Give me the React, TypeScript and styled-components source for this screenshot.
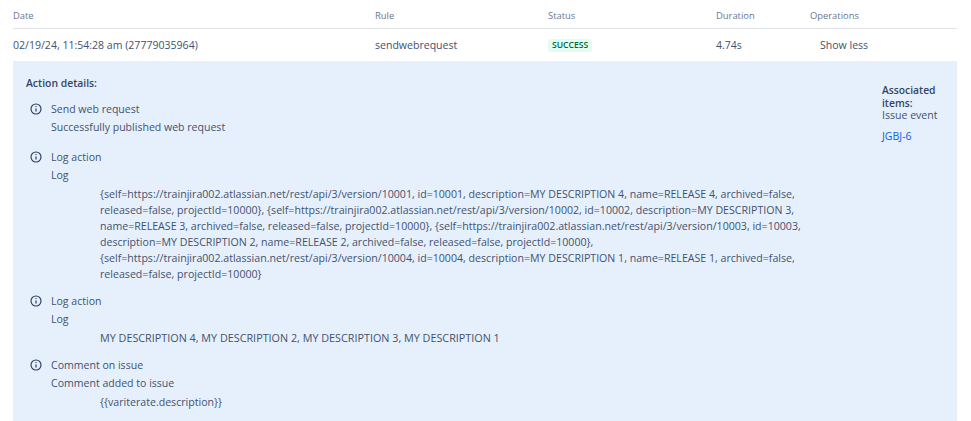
import styled, { createGlobalStyle } from 'styled-components';

const GlobalStyle = createGlobalStyle`
    html, body {
        margin: 0;
        padding: 0;
        background: #fff;
    }
    body {
        font-family: "Open Sans", "Noto Sans", "Liberation Sans", sans-serif;
        font-size: 10.55px;
        color: #42526e;
    }
`;

const Page = styled.div`
    width: 971px;
    height: 421px;
    overflow: hidden;
    padding: 0 14px 0 13px;
    box-sizing: border-box;
`;

const Row = styled.div`
    display: grid;
    grid-template-columns: 362px 173px 168px 94px 1fr;
    align-items: center;
`;

const HeaderRow = styled(Row)`
    height: 29px;
    padding-top: 2px;
    box-sizing: border-box;
    border-bottom: 1px solid #dfe1e6;
    font-size: 9.4px;
    color: #6b778c;
`;

const BodyRow = styled(Row)`
    height: 32px;
`;

const Lozenge = styled.span`
    justify-self: start;
    background: #e3fcef;
    color: #006644;
    font-size: 8.6px;
    font-weight: 600;
    line-height: 13px;
    padding: 0 4px;
    border-radius: 3px;
`;

const ShowLess = styled.span`
    padding-left: 10px;
`;

const Details = styled.div`
    height: 360px;
    background: #e6f0fc;
    display: flex;
    justify-content: space-between;
    padding: 14px 0 0 13px;
    box-sizing: border-box;
`;

const Actions = styled.div`
    width: 800px;
`;

const DetailsTitle = styled.div`
    font-size: 10.4px;
    font-weight: 600;
    color: #344563;
    line-height: 16px;
`;

const ActionList = styled.div`
    margin-top: 9px;
    display: flex;
    flex-direction: column;
    gap: 10px;
`;

const Action = styled.div<{ $plain?: boolean }>`
    display: grid;
    grid-template-columns: 25px 1fr;
    padding-bottom: ${(p) => (p.$plain ? '2px' : '0')};
`;

const IconCell = styled.div`
    padding: 3px 0 0 4px;
    color: #253858;
`;

const ActionText = styled.div`
    line-height: 18px;
`;

const Message = styled.div<{ $caps?: boolean }>`
    margin: 2px 0 0 74px;
    line-height: 16px;
    font-size: ${(p) => (p.$caps ? '10.8px' : '10.62px')};
`;

const Side = styled.div`
    width: 75px;
    padding-top: 9px;
    line-height: 12.5px;
`;

const SideTitle = styled.div`
    font-size: 10.3px;
    font-weight: 600;
    color: #344563;
`;

const IssueLink = styled.a`
    display: block;
    margin-top: 8px;
    color: #0b5fdd;
    text-decoration: none;
`;

function InfoIcon() {
    return (
        <svg width="12" height="12" viewBox="0 0 12 12" fill="none" stroke="currentColor">
            <circle cx="6" cy="6" r="5" strokeWidth="1.1" />
            <path d="M6 5.4v3" strokeWidth="1.2" />
            <circle cx="6" cy="3.6" r="0.7" fill="currentColor" stroke="none" />
        </svg>
    );
}

const actions = [
    {
        title: 'Send web request',
        sub: 'Successfully published web request',
    },
    {
        title: 'Log action',
        sub: 'Log',
        lines: [
            '{self=https://trainjira002.atlassian.net/rest/api/3/version/10001, id=10001, description=MY DESCRIPTION 4, name=RELEASE 4, archived=false,',
            'released=false, projectId=10000}, {self=https://trainjira002.atlassian.net/rest/api/3/version/10002, id=10002, description=MY DESCRIPTION 3,',
            'name=RELEASE 3, archived=false, released=false, projectId=10000}, {self=https://trainjira002.atlassian.net/rest/api/3/version/10003, id=10003,',
            'description=MY DESCRIPTION 2, name=RELEASE 2, archived=false, released=false, projectId=10000},',
            '{self=https://trainjira002.atlassian.net/rest/api/3/version/10004, id=10004, description=MY DESCRIPTION 1, name=RELEASE 1, archived=false,',
            'released=false, projectId=10000}',
        ],
    },
    {
        title: 'Log action',
        sub: 'Log',
        caps: true,
        lines: ['MY DESCRIPTION 4, MY DESCRIPTION 2, MY DESCRIPTION 3, MY DESCRIPTION 1'],
    },
    {
        title: 'Comment on issue',
        sub: 'Comment added to issue',
        lines: ['{{variterate.description}}'],
    },
];

function App() {
    return (
        <Page>
            <GlobalStyle />
            <HeaderRow>
                <span>Date</span>
                <span>Rule</span>
                <span>Status</span>
                <span>Duration</span>
                <span>Operations</span>
            </HeaderRow>
            <BodyRow>
                <span>02/19/24, 11:54:28 am (27779035964)</span>
                <span>sendwebrequest</span>
                <Lozenge>SUCCESS</Lozenge>
                <span>4.74s</span>
                <ShowLess>Show less</ShowLess>
            </BodyRow>
            <Details>
                <Actions>
                    <DetailsTitle>Action details:</DetailsTitle>
                    <ActionList>
                        {actions.map((a, i) => (
                            <div key={i}>
                                <Action $plain={!a.lines}>
                                    <IconCell><InfoIcon /></IconCell>
                                    <ActionText>
                                        <div>{a.title}</div>
                                        <div>{a.sub}</div>
                                    </ActionText>
                                </Action>
                                {a.lines && (
                                    <Message $caps={a.caps}>
                                        {a.lines.map((l, j) => <div key={j}>{l}</div>)}
                                    </Message>
                                )}
                            </div>
                        ))}
                    </ActionList>
                </Actions>
                <Side>
                    <SideTitle>Associated items:</SideTitle>
                    <div>Issue event</div>
                    <IssueLink>JGBJ-6</IssueLink>
                </Side>
            </Details>
        </Page>
    );
}

export default App;
